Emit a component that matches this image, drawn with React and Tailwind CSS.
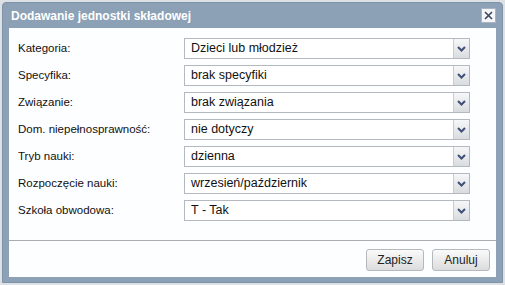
const rows = [
  { label: 'Kategoria:', value: 'Dzieci lub młodzież' },
  { label: 'Specyfika:', value: 'brak specyfiki' },
  { label: 'Związanie:', value: 'brak związania' },
  { label: 'Dom. niepełnosprawność:', value: 'nie dotyczy' },
  { label: 'Tryb nauki:', value: 'dzienna' },
  { label: 'Rozpoczęcie nauki:', value: 'wrzesień/październik' },
  { label: 'Szkoła obwodowa:', value: 'T - Tak' }
];

function Chevron() {
  return (
    <svg width="9" height="6" viewBox="0 0 9 6">
      <path d="M1 1 L4.5 4.5 L8 1" fill="none" stroke="#3f4f78" strokeWidth="2" />
    </svg>
  );
}

function FakeSelect({ value }) {
  return (
    <div className="flex h-[21px] w-[286px] border border-[#b3b9bf] bg-white">
      <div className="flex-1 flex items-center pl-[6px] text-[12.5px] text-[#111] leading-none">{value}</div>
      <div className="w-[16px] flex items-center justify-center border-l border-[#c9cdd1] bg-gradient-to-b from-[#f6f7f8] to-[#d9dcdf]">
        <Chevron />
      </div>
    </div>
  );
}

function Btn({ children }) {
  return (
    <button
      type="button"
      className="w-[58px] h-[22px] rounded-[3px] border border-[#b5b9bd] bg-gradient-to-b from-[#fafafa] to-[#dcdcdc] text-[12px] text-[#222]"
    >
      {children}
    </button>
  );
}

export default function App() {
  return (
    <div className="w-[505px] h-[285px] bg-[#dde1e5] p-[2px] font-['Liberation_Sans',Arial,sans-serif]">
      <div className="h-full flex flex-col bg-[#8ca1b6] rounded-t-[4px] px-[6px] pb-[5px] border border-[#7f93a8]">
        <div className="h-[25px] flex items-center justify-between pl-[2px]">
          <span className="text-white font-bold text-[12px]">Dodawanie jednostki składowej</span>
          <div className="w-[15px] h-[15px] bg-[#f4f6f9] border border-[#aab4c0] flex items-center justify-center">
            <svg width="9" height="9" viewBox="0 0 9 9">
              <path d="M1 1 L8 8 M8 1 L1 8" stroke="#3b4660" strokeWidth="1.6" />
            </svg>
          </div>
        </div>
        <div className="flex-1 flex flex-col bg-[#fdfeff]">
          <div className="pt-[10px] pl-[9px] flex flex-col gap-[6px]">
            {rows.map((r) => (
              <div key={r.label} className="flex items-center">
                <div className="w-[166px] text-[11.5px] text-[#111]">{r.label}</div>
                <FakeSelect value={r.value} />
              </div>
            ))}
          </div>
          <div className="mt-auto border-t border-[#a9adb1] h-[37px] flex items-center justify-end gap-[8px] pr-[6px] pt-[1px]">
            <Btn>Zapisz</Btn>
            <Btn>Anuluj</Btn>
          </div>
        </div>
      </div>
    </div>
  );
}
